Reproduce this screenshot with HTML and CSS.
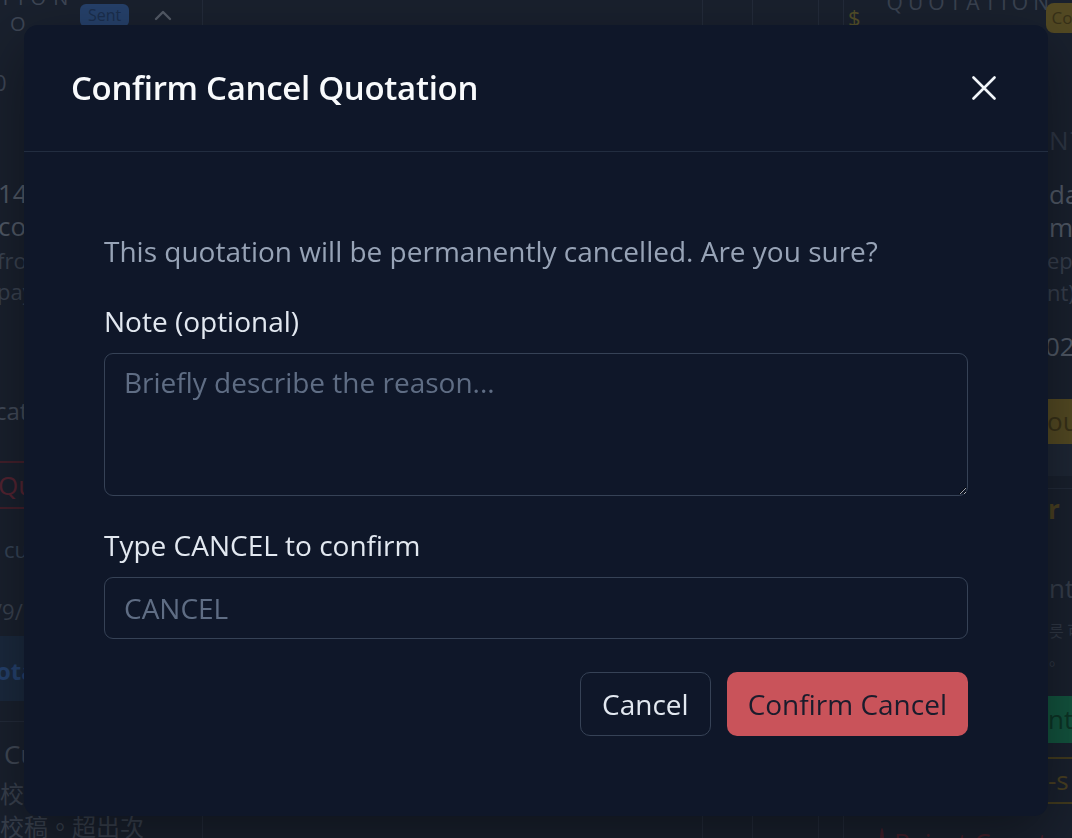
FILE: index.html
```html
<!DOCTYPE html>
<html lang="en">
<head>
<meta charset="utf-8">
<title>Confirm Cancel Quotation</title>
<link rel="stylesheet" href="styles.css">
</head>
<body>
<div class="page">
  <aside class="col-left">
    <div class="lc-head">
      <div class="lc-title"><span class="spaced">TION</span><span class="spaced sub">O</span></div>
      <span class="badge-sent">Sent</span>
      <svg class="chev" viewBox="0 0 24 24" width="24" height="24"><path d="M5 15l7-7 7 7" fill="none" stroke="currentColor" stroke-width="2.4" stroke-linecap="round" stroke-linejoin="round"/></svg>
    </div>
    <div class="lc-zero">0</div>
    <div class="lc-big lc-first">14</div>
    <div class="lc-big">co</div>
    <div class="lc-small lc-s1">fro</div>
    <div class="lc-small">pay</div>
    <div class="lc-mid">cat</div>
    <div class="lc-red">Qu</div>
    <div class="lc-cu">cu</div>
    <div class="lc-date">/9/</div>
    <div class="lc-blue">ota</div>
    <div class="lc-cu2">Cu</div>
    <div class="lc-cjk lc-c1">校</div>
    <div class="lc-cjk lc-c2">校稿。超出次</div>
  </aside>
  <main class="col-mid">
    <div class="mid-a"></div>
    <div class="mid-b"></div>
    <div class="mid-c"></div>
    <div class="mid-d"></div>
  </main>
  <aside class="col-right">
    <div class="rc-head">
      <span class="rc-dollar">$</span>
      <span class="rc-title">QUOTATION</span>
      <span class="badge-gold">Co</span>
    </div>
    <div class="rc-item rc-nt">NT</div>
    <div class="rc-item rc-big rc-da">da</div>
    <div class="rc-item rc-big">ma</div>
    <div class="rc-item rc-sm">epo</div>
    <div class="rc-item rc-sm">nt)</div>
    <div class="rc-item rc-big rc-num">02</div>
    <div class="rc-goldbar">ou</div>
    <div class="rc-item rc-goldtxt">r</div>
    <div class="rc-item rc-big rc-nt2">nt</div>
    <div class="rc-item rc-tiny rc-t1">릇 可</div>
    <div class="rc-item rc-tiny rc-t2">。</div>
    <div class="rc-green">nt</div>
    <div class="rc-goldrow">-s</div>
    <div class="rc-reject"><span class="rc-circle"></span>Reject Counter</div>
  </aside>
</div>

<div class="overlay">
  <section class="modal" role="dialog" aria-labelledby="modal-title">
    <header class="modal-header">
      <h2 class="modal-title" id="modal-title">Confirm Cancel Quotation</h2>
      <button class="close-btn" type="button" aria-label="Close">
        <svg viewBox="0 0 24 24" width="24" height="24"><path d="M1.5 1.5 22.5 22.5M22.5 1.5 1.5 22.5" fill="none" stroke="currentColor" stroke-width="2.6" stroke-linecap="round"/></svg>
      </button>
    </header>
    <div class="modal-body">
      <p class="warning">This quotation will be permanently cancelled. Are you sure?</p>
      <label class="field">
        <span class="field-label">Note (optional)</span>
        <textarea class="field-textarea" placeholder="Briefly describe the reason..."></textarea>
      </label>
      <label class="field">
        <span class="field-label">Type CANCEL to confirm</span>
        <input class="field-input" type="text" placeholder="CANCEL">
      </label>
      <div class="actions">
        <button class="btn btn-secondary" type="button">Cancel</button>
        <button class="btn btn-danger" type="button">Confirm Cancel</button>
      </div>
    </div>
  </section>
</div>
</body>
</html>
```

FILE: styles.css
```css
* { box-sizing: border-box; }

html, body {
  margin: 0;
  padding: 0;
  height: 100%;
}

body {
  font-family: "Open Sans", "Noto Sans", "Noto Sans CJK SC", sans-serif;
  overflow: hidden;
}

/* ---------- background page ---------- */
.page {
  display: grid;
  grid-template-columns: 203px 1fr 229px;
  height: 838px;
  background: #2a364c;
  color: #7f8da4;
  overflow: hidden;
}

.col-left {
  display: flex;
  flex-direction: column;
  border-right: 1px solid #3a4760;
  overflow: hidden;
  white-space: nowrap;
}

.lc-head {
  display: flex;
  align-items: flex-start;
  height: 60px;
  gap: 12px;
  flex: none;
}

.lc-title {
  display: flex;
  flex-direction: column;
  margin-top: -15px;
  font-size: 20px;
  line-height: 26px;
  color: #66748c;
  width: 68px;
}

.spaced { letter-spacing: 7px; }
.sub { margin-left: 10px; }

.badge-sent {
  margin-top: 4px;
  background: #3e6bb0;
  color: #2c4d80;
  font-size: 16px;
  padding: 0 8px;
  height: 23px;
  line-height: 23px;
  border-radius: 6px;
}

.chev {
  margin-top: 4px;
  margin-left: 10px;
  color: #8a96aa;
}

.lc-zero {
  margin-top: 7px;
  margin-left: -6px;
  font-size: 22px;
  line-height: 30px;
  color: #66748c;
}

.lc-big {
  font-size: 26px;
  line-height: 33px;
  color: #8593a9;
  margin-left: -2px;
}

.lc-first { margin-top: 80px; }

.lc-small {
  font-size: 22px;
  line-height: 31px;
  color: #5f6d84;
  margin-left: -3px;
}

.lc-s1 { margin-top: 2px; }

.lc-mid {
  margin-top: 84px;
  margin-left: -5px;
  font-size: 24px;
  line-height: 40px;
  color: #6e7c94;
}

.lc-red {
  margin-top: 30px;
  border-top: 2px solid #6e3448;
  border-bottom: 2px solid #6e3448;
  height: 48px;
  line-height: 44px;
  font-size: 26px;
  color: #8a3b52;
  margin-left: -2px;
}

.lc-cu {
  margin-top: 25px;
  margin-left: 4px;
  font-size: 22px;
  line-height: 30px;
  color: #59708f;
}

.lc-date {
  margin-top: 32px;
  margin-left: -6px;
  font-size: 22px;
  line-height: 30px;
  color: #5f6d84;
}

.lc-blue {
  margin-top: 10px;
  height: 65px;
  line-height: 70px;
  background: #2c4466;
  font-size: 24px;
  font-weight: 700;
  color: #3d6cb5;
  margin-left: -4px;
}

.lc-cu2 {
  margin-top: 20px;
  border-top: 1px solid #3a4760;
  padding-top: 14px;
  font-size: 26px;
  line-height: 36px;
  color: #6b798f;
  padding-left: 4px;
}

.lc-cjk {
  font-family: "Noto Sans CJK TC", "Noto Sans CJK SC", sans-serif;
  font-size: 24px;
  line-height: 33px;
  color: #5d6a80;
}

.lc-c1 { margin-top: 4px; }

.col-mid {
  display: grid;
  grid-template-columns: 1fr 50px 66px 24px;
}

.mid-a, .mid-b, .mid-c { border-right: 1px solid #3a4760; }

.col-right {
  display: flex;
  flex-direction: column;
  border-left: 1px solid #3a4760;
  overflow: hidden;
  white-space: nowrap;
}

.rc-head {
  display: flex;
  align-items: flex-start;
  height: 60px;
  flex: none;
}

.rc-dollar {
  margin-left: 4px;
  margin-top: 2px;
  color: #8a8244;
  font-size: 22px;
}

.rc-title {
  margin-left: 26px;
  margin-top: -12px;
  font-size: 21px;
  letter-spacing: 5px;
  color: #5f6d84;
  width: 159px;
}

.badge-gold {
  margin-top: 3px;
  background: #8a7a3a;
  color: #5c5128;
  font-size: 17px;
  height: 30px;
  line-height: 30px;
  padding: 0 6px;
  border-radius: 8px;
}

.rc-item { margin-left: 205px; }

.rc-nt {
  margin-top: 62px;
  font-size: 26px;
  letter-spacing: 2px;
  color: #4c5a72;
  line-height: 36px;
}

.rc-big {
  font-size: 26px;
  line-height: 33px;
  color: #8593a9;
}

.rc-da { margin-top: 20px; }

.rc-sm {
  font-size: 22px;
  line-height: 32px;
  color: #5b6880;
  margin-left: 203px;
}

.rc-num { margin-top: 22px; margin-left: 201px; }

.rc-goldbar {
  margin-top: 36px;
  height: 77px;
  line-height: 45px;
  background: #8a7a3a;
  color: #5c5128;
  font-size: 26px;
  padding-left: 203px;
  border-bottom: 32px solid #324058;
  flex: none;
}

.rc-goldtxt {
  margin-top: 12px;
  border-top: 1px solid #3a4760;
  font-size: 26px;
  font-weight: 700;
  color: #7a6a38;
  line-height: 40px;
  margin-left: 0;
  padding-left: 204px;
}

.rc-nt2 { margin-top: 43px; color: #59667c; }

.rc-tiny {
  font-family: "Noto Sans CJK KR", sans-serif;
  font-size: 16px;
  line-height: 22px;
  color: #4f5c72;
}

.rc-t1 { margin-top: 14px; }
.rc-t2 { margin-top: 6px; }

.rc-green {
  margin-top: 27px;
  height: 47px;
  line-height: 47px;
  background: #1f8a67;
  color: #14573f;
  font-size: 26px;
  padding-left: 204px;
  flex: none;
}

.rc-goldrow {
  margin-top: 14px;
  border-top: 2px solid #6e6232;
  border-bottom: 2px solid #6e6232;
  height: 47px;
  line-height: 43px;
  font-size: 26px;
  color: #7a6a38;
  padding-left: 204px;
  flex: none;
}

.rc-reject {
  margin-top: 20px;
  margin-left: 36px;
  display: flex;
  align-items: center;
  gap: 10px;
  font-size: 26px;
  color: #6e3448;
  flex: none;
}

.rc-circle {
  width: 28px;
  height: 28px;
  border: 2px solid #6e3448;
  border-radius: 50%;
}

/* ---------- overlay + modal ---------- */
.overlay {
  position: fixed;
  inset: 0;
  background: rgba(0, 0, 0, 0.4);
  display: flex;
  align-items: center;
  justify-content: center;
}

.modal {
  width: 1024px;
  margin-top: 2px;
  background: #0f1729;
  border-radius: 14px;
  box-shadow: 0 20px 60px rgba(0, 0, 0, 0.4);
  color: #e2e8f0;
}

.modal-header {
  height: 127px;
  border-bottom: 1px solid #222d40;
  display: flex;
  align-items: center;
  justify-content: space-between;
  padding: 0 48px 0 47px;
}

.modal-title {
  margin: 0;
  font-size: 33px;
  font-weight: 600;
  color: #f8fafc;
  letter-spacing: -0.3px;
}

.close-btn {
  width: 32px;
  height: 32px;
  padding: 0;
  border: 0;
  background: transparent;
  color: #f1f5f9;
  display: flex;
  align-items: center;
  justify-content: center;
  cursor: pointer;
}

.modal-body {
  padding: 78px 80px 80px;
  display: flex;
  flex-direction: column;
}

.warning {
  margin: 0 0 28px;
  font-size: 28px;
  line-height: 42px;
  color: #97a3b6;
}

.field {
  display: flex;
  flex-direction: column;
  margin-bottom: 28px;
}

.field + .field { margin-bottom: 33px; }

.field-label {
  font-size: 28px;
  line-height: 42px;
  color: #e2e8f0;
  margin-bottom: 11px;
}

.field-textarea,
.field-input {
  width: 100%;
  font-family: inherit;
  font-size: 28px;
  line-height: 42px;
  color: #e2e8f0;
  background: transparent;
  border: 1.5px solid #364256;
  border-radius: 9px;
  outline: none;
}

.field-textarea {
  height: 143px;
  padding: 7px 19px;
  resize: vertical;
}

.field-input {
  height: 62px;
  padding: 8px 19px;
}

.field-textarea::placeholder,
.field-input::placeholder {
  color: #5f6d84;
}

.actions {
  display: flex;
  justify-content: flex-end;
  gap: 16px;
}

.btn {
  height: 64px;
  padding: 0 21px;
  font-family: inherit;
  font-size: 28px;
  border-radius: 10px;
  cursor: pointer;
}

.btn-secondary {
  background: transparent;
  color: #e2e8f0;
  border: 1.5px solid #364256;
}

.btn-danger {
  background: #c9535a;
  color: #1a1c2c;
  border: 0;
}
```
